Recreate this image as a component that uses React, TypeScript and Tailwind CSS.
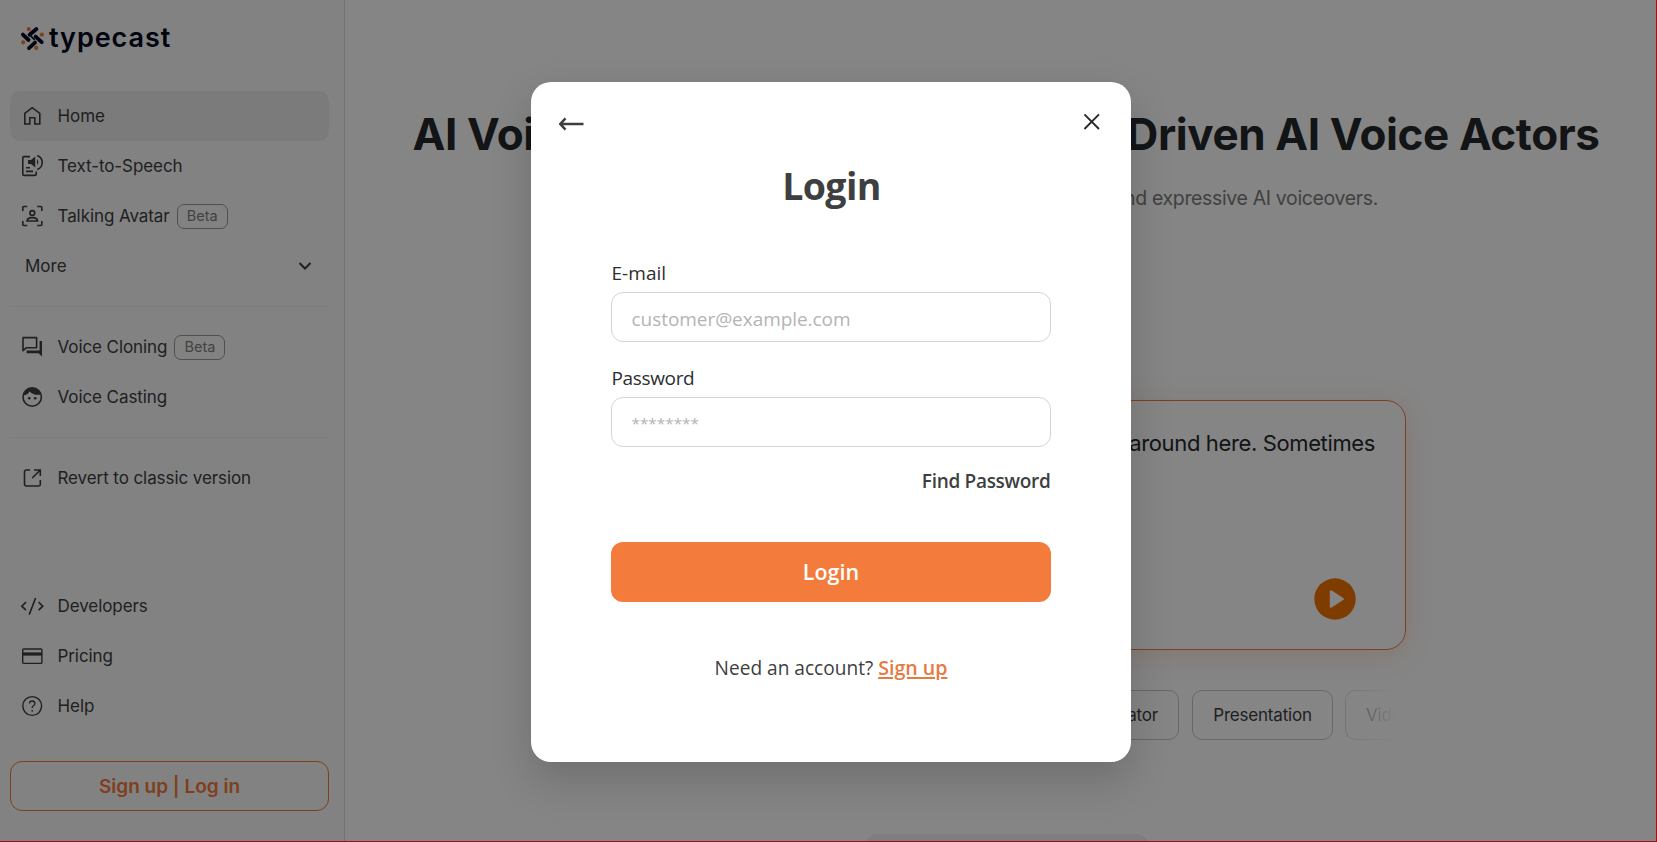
import type { ReactNode } from "react";

function Logo() {
  return (
    <div className="flex h-6 items-start gap-[5px]">
      <svg width="24" height="24" viewBox="0 0 24 24" fill="none" className="mt-[2px] overflow-visible">
        <g stroke="#02091c" strokeWidth="3.8" strokeLinecap="round">
          <path d="M16.4 2L9.6 7.8" />
          <path d="M2.9 7.6L8.6 13" />
          <path d="M15.6 9.6L21.7 15.2" />
          <path d="M9 21.2L15 15.6" />
          <path d="M11.2 9.4L14.2 12.4" strokeWidth="1.6" />
        </g>
        <g fill="#f37a3b">
          <circle cx="8.7" cy="2.1" r="2.1" />
          <circle cx="21.9" cy="7.7" r="2.1" />
          <circle cx="3.2" cy="15.3" r="2.1" />
          <circle cx="16.2" cy="20.9" r="2.1" />
        </g>
      </svg>
      <span className="pt-px text-[27px] leading-[24px] font-semibold tracking-[0.95px] text-[#02091c]">typecast</span>
    </div>
  );
}

function Beta() {
  return (
    <span className="ml-[7px] flex h-[25px] w-[51px] items-center justify-center rounded-[7px] border border-[#999] text-[14.5px] text-[#7f7f7f]">
      Beta
    </span>
  );
}

function Item({ icon, label, beta, active }: { icon: ReactNode; label: string; beta?: boolean; active?: boolean }) {
  return (
    <div className={`flex h-[50px] items-center rounded-[10px] pl-[10px] text-[17px] text-[#3c3e42] ${active ? "bg-[#ebebeb]" : ""}`}>
      <span className="mr-[13.5px] flex w-6 justify-center">{icon}</span>
      <span className="pt-[2px] tracking-[-0.08px]">{label}</span>
      {beta && <Beta />}
    </div>
  );
}

const line = { fill: "none", stroke: "currentColor", strokeWidth: 1.6, width: 24, height: 24, viewBox: "0 0 24 24" };

const Home = () => (
  <svg {...line}>
    <path d="M4.8 9.4L12.2 3.7L19.8 9.4V20H14.8V13.8H9.8V20H4.8Z" />
  </svg>
);
const Tts = () => (
  <svg {...line}>
    <path d="M10 2.6H4Q2.8 2.6 2.8 3.8V20.2Q2.8 21.4 4 21.4H15Q16.2 21.4 16.2 20.2V17.6" />
    <path d="M6 13.8H10M6 17.4H13" />
    <path d="M8 6H11L15.2 2.6V13.4L11 10H8Z" fill="currentColor" stroke="none" />
    <path d="M17 5Q19.6 8 17 11Z" fill="currentColor" stroke="none" />
    <path d="M17.2 1.6Q22.2 3.6 22.2 8.4Q22.2 13.6 17.2 15.6" />
  </svg>
);
const Avatar = () => (
  <svg {...line}>
    <path d="M2.8 7V3.5Q2.8 2.5 3.8 2.5H7.2M17.2 2.5H20.8Q21.8 2.5 21.8 3.5V7M21.8 17V20.5Q21.8 21.5 20.8 21.5H17.2M7.2 21.5H3.8Q2.8 21.5 2.8 20.5V17" />
    <circle cx="12.3" cy="9" r="2.4" />
    <path d="M7 17Q7.3 13.6 12.3 13.6T17.6 17Z" />
  </svg>
);
const Chat = () => (
  <svg {...line}>
    <path d="M3 2.6H16.6V12.8H6.2L3 15.6Z" strokeLinejoin="round" />
    <path d="M19.6 6H22V21.4L18.6 18.2H6.6V15.6H19.6Z" fill="currentColor" stroke="none" />
  </svg>
);
const Face = () => (
  <svg {...line}>
    <circle cx="12.2" cy="12" r="9.2" />
    <path d="M3.2 10.6Q7.8 9.6 9.6 6.4Q13.8 10.8 21.2 9.6Q19.2 2.8 12.2 2.8Q4.6 3.4 3.2 10.6Z" fill="currentColor" stroke="none" />
    <circle cx="9.2" cy="13.2" r="1.3" fill="currentColor" stroke="none" />
    <circle cx="15.2" cy="13.2" r="1.3" fill="currentColor" stroke="none" />
  </svg>
);
const External = () => (
  <svg {...line}>
    <path d="M10 4H6.5Q4.5 4 4.5 6V18Q4.5 20 6.5 20H18.3Q20.3 20 20.3 18V14M14 4H20.3V10M20.3 4L12.2 12" />
  </svg>
);
const Code = () => (
  <svg {...line}>
    <path d="M6 8.2L1.8 12.2L6 16.2M18.6 8.2L22.8 12.2L18.6 16.2M15.6 4L9.2 20.6" />
  </svg>
);
const Card = () => (
  <svg {...line}>
    <rect x="2.7" y="5" width="19.2" height="14.4" rx="1" strokeWidth="1.4" />
    <path d="M2.7 10H21.9" strokeWidth="3.2" />
  </svg>
);
const Help = () => (
  <svg {...line}>
    <circle cx="12.2" cy="12" r="9.4" strokeWidth="1.4" />
    <path d="M9.5 9.6Q9.6 7 12.2 7T14.9 9.4Q14.9 10.8 13.4 11.7T12.2 14.2" strokeWidth="1.3" />
    <circle cx="12.2" cy="16.8" r="0.9" fill="currentColor" stroke="none" />
  </svg>
);

function Sidebar() {
  return (
    <aside className="flex h-[842px] w-[345px] shrink-0 flex-col border-r border-[#dedede] bg-[#f9f9f9] pl-[10px] pr-[15px]">
      <div className="ml-[10px] mt-[25px] h-[66px]">
        <Logo />
      </div>
      <Item icon={<Home />} label="Home" active />
      <Item icon={<Tts />} label="Text-to-Speech" />
      <Item icon={<Avatar />} label="Talking Avatar" beta />
      <div className="flex h-[50px] items-center justify-between pl-[15px] pr-4 text-[17px] text-[#3c3e42]">
        <span className="pt-[2px]">More</span>
        <svg width="16" height="16" viewBox="0 0 16 16" fill="none" stroke="currentColor" strokeWidth="2">
          <path d="M2.5 5L8 10.5L13.5 5" />
        </svg>
      </div>
      <div className="mb-[15px] mt-[15px] h-px bg-[#ededed]" />
      <Item icon={<Chat />} label="Voice Cloning" beta />
      <Item icon={<Face />} label="Voice Casting" />
      <div className="mb-[15px] mt-[15px] h-px bg-[#ededed]" />
      <Item icon={<External />} label="Revert to classic version" />
      <div className="mt-auto">
        <Item icon={<Code />} label="Developers" />
        <Item icon={<Card />} label="Pricing" />
        <Item icon={<Help />} label="Help" />
      </div>
      <button className="mb-[31px] mt-[30px] h-[50px] shrink-0 rounded-xl border border-[#f37a3b] pt-[2px] text-[19px] font-semibold text-[#f37a3b]">
        Sign up | Log in
      </button>
    </aside>
  );
}

function Main() {
  return (
    <main className="flex h-[842px] grow flex-col items-center overflow-hidden bg-white pl-[10px]">
      <h1 className="mt-[101px] flex h-[66px] w-[1187px] justify-between whitespace-nowrap text-[44px] leading-[66px] font-bold tracking-[-0.4px] text-[#26282b]">
        <span>AI Voice Generator with</span>
        <span>Emotion-Driven AI Voice Actors</span>
      </h1>
      <p className="mt-[14px] h-[34px] w-[744px] whitespace-nowrap text-right text-[19.5px] leading-[34px] tracking-[-0.35px] text-[#7d7d7d]">
        Create engaging content with realistic and expressive AI voiceovers.
      </p>
      <div className="mt-[185px] flex h-[250px] w-[800px] shrink-0 flex-col rounded-[20px] border border-[#f37a3b] pr-[30px] pt-[25px] shadow-[0_4px_26px_rgba(243,122,59,0.22)]">
        <p className="whitespace-nowrap text-right text-[22px] leading-[34px] tracking-[-0.37px] text-[#26282b]">
          Things can get pretty interesting around here. Sometimes
        </p>
        <svg width="42" height="42" viewBox="0 0 42 42" className="mt-[118px] mr-[19px] self-end">
          <circle cx="21" cy="21" r="20.7" fill="#f27300" />
          <path d="M16.8 13.2V28.8L29 21Z" fill="#fff" stroke="#fff" strokeWidth="2" strokeLinejoin="round" />
        </svg>
      </div>
      <div className="mt-10 flex w-[800px] shrink-0 justify-end gap-[13px] overflow-hidden text-[17px] tracking-[-0.2px] text-[#3c3e42]">
        <div className="flex h-[50px] w-[120px] shrink-0 items-center justify-end rounded-[10px] border border-[#c8c8c8] pr-5 pt-px">Narrator</div>
        <div className="flex h-[50px] w-[141px] shrink-0 items-center justify-center rounded-[10px] border border-[#c8c8c8] pt-px">Presentation</div>
        <div className="-ml-px flex h-[50px] w-[61px] shrink-0 items-center overflow-hidden rounded-l-[10px] border border-r-0 border-[#c8c8c8] pl-5 pt-px [mask-image:linear-gradient(to_right,rgba(0,0,0,0.6),transparent_85%)]">
          Video
        </div>
      </div>
      <div className="mt-[94px] h-20 w-[285px] shrink-0 rounded-[14px] bg-[#f1f1f1]" />
    </main>
  );
}

function Field({ label, placeholder, masked }: { label: string; placeholder: string; masked?: boolean }) {
  return (
    <label className="flex flex-col">
      <span className={`h-9 pl-px text-[19px] leading-[35px] text-[#2d2e30] ${masked ? "tracking-[-0.35px]" : "tracking-[0.05px]"}`}>{label}</span>
      <input
        placeholder={placeholder}
        className={`h-[50px] rounded-xl border border-[#d4d4d4] px-5 outline-none placeholder:text-[#b4b4b4] ${masked ? "pt-[2px] text-[15.3px]" : "pt-[3px] text-[19px] tracking-[-0.05px]"}`}
      />
    </label>
  );
}

function LoginModal() {
  return (
    <div className="flex h-[680px] w-[600px] flex-col rounded-[20px] bg-white font-['Open_Sans','Noto_Sans',sans-serif] shadow-[0_18px_40px_rgba(0,0,0,0.17)]">
      <div className="flex h-[84px] items-start justify-between pl-7 pr-[31px]">
        <svg width="25" height="14" viewBox="0 0 25 14" fill="none" stroke="#3e3e3e" strokeWidth="2.5" className="mt-[35px]">
          <path d="M24.5 7H1.3M6.5 1.4L1.3 7L6.5 12.6" />
        </svg>
        <svg width="16" height="16" viewBox="0 0 16 16" stroke="#26282b" strokeWidth="1.9" className="mt-[32px]">
          <path d="M0.4 0.4L15 15M15 0.4L0.4 15" />
        </svg>
      </div>
      <h2 className="h-[40px] pl-[2px] text-center text-[37.5px] leading-[40px] font-bold tracking-[-0.6px] text-[#3e3f41]">Login</h2>
      <div className="mt-[50px] flex flex-col gap-[19px] px-20">
        <Field label="E-mail" placeholder="customer@example.com" />
        <Field label="Password" placeholder="********" masked />
      </div>
      <a className="mt-5 self-end pr-20 text-[19px] leading-7 font-semibold tracking-[-0.3px] text-[#3e3f41]">Find Password</a>
      <button className="mx-20 mt-[47px] h-[60px] shrink-0 rounded-xl bg-[#f37b3c] pt-px pl-px text-[21.5px] font-semibold text-white">Login</button>
      <p className="mt-[51px] pl-px text-center text-[19.1px] leading-[30px] text-[#3e3f41]">
        Need an account? <a className="text-[19.6px] font-semibold text-[#e77a41] underline decoration-2 underline-offset-2">Sign up</a>
      </p>
    </div>
  );
}

export default function App() {
  return (
    <div className="relative flex h-[842px] w-full overflow-hidden font-['Inter',sans-serif]">
      <Sidebar />
      <Main />
      <div className="absolute inset-0 flex justify-center border-b border-r border-[#a01016] bg-black/48 pl-[5px] pt-[82px]">
        <LoginModal />
      </div>
    </div>
  );
}
